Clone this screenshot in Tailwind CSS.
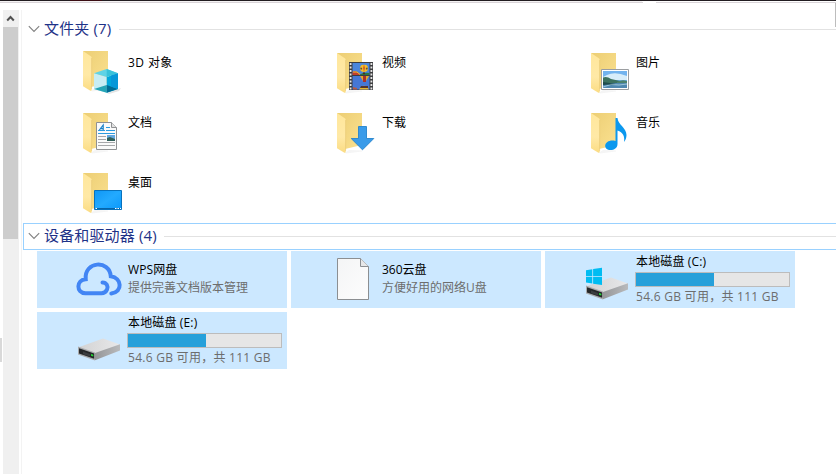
<!DOCTYPE html>
<html lang="zh-CN">
<head>
<meta charset="utf-8">
<title>此电脑</title>
<script src="https://cdn.jsdelivr.net/npm/@tailwindcss/browser@4"></script>
</head>
<body class="w-[836px] h-[474px] overflow-hidden bg-white text-black text-[12px] leading-[18px] font-['Open_Sans','Noto_Sans_CJK_SC',sans-serif] flex flex-col">
<svg class="absolute w-0 h-0">
  <defs>
    <linearGradient id="back" x1="0" y1="0" x2="1" y2="1"><stop offset="0" stop-color="#ecce74"/><stop offset="1" stop-color="#fbe190"/></linearGradient>
    <linearGradient id="front" x1="0" y1="0" x2="0" y2="1"><stop offset="0" stop-color="#ffe79c"/><stop offset=".6" stop-color="#ffe9a6"/><stop offset="1" stop-color="#fbdc83"/></linearGradient>
    <linearGradient id="screen" x1="0" y1="0" x2="1" y2="1"><stop offset="0" stop-color="#0f97f5"/><stop offset=".5" stop-color="#23aaff"/><stop offset="1" stop-color="#0a98fb"/></linearGradient>
    <linearGradient id="metal" x1="0" y1="0" x2="1" y2="0"><stop offset="0" stop-color="#d2d2d3"/><stop offset="1" stop-color="#e8e8e9"/></linearGradient>
    <linearGradient id="side" x1="0" y1="0" x2="1" y2="0"><stop offset="0" stop-color="#959698"/><stop offset="1" stop-color="#b9babc"/></linearGradient>
    <linearGradient id="paper" x1="0" y1="0" x2="1" y2="1"><stop offset="0" stop-color="#f4f5f6"/><stop offset="1" stop-color="#fdfdfd"/></linearGradient>
    <symbol id="folder" viewBox="0 0 48 48">
      <path d="M13 44.5L17 42L30 42.5V43.5L14 45.5Z" fill="#f5f5f5"/>
      <path d="M5 5H30V37L13 41Z" fill="url(#back)"/>
      <path d="M5 5L12.8 10.2Q13.7 10.8 13.7 12V43.5Q13.7 45.3 12 44.4L5 40.2Z" fill="url(#front)"/>
      <path d="M13.6 12V43" stroke="#e2c36a" stroke-width=".5"/>
    </symbol>
    <symbol id="drive" viewBox="0 0 44 26">
      <path d="M1 10.5L26 1.5L43 7.5L18 17.5Z" fill="url(#metal)"/>
      <path d="M18 16L43 7.2V13.5L18 23.3Z" fill="url(#side)"/>
      <path d="M1 9.6L18 15.6V23.4L1 17.6Z" fill="#a9aaac"/>
      <path d="M2 11.2L17.2 16.6V21.8L2 16.6Z" fill="#252729"/>
      <path d="M6 14.5L13 17V19.6L6 17.2Z" fill="#3b3d40"/>
      <path d="M14 17L16.3 17.8V19.6L14 18.8Z" fill="#22dd35"/>
    </symbol>
    <symbol id="balloon" viewBox="0 0 9 10">
      <ellipse cx="4.5" cy="3.8" rx="4" ry="3.8" fill="#f5bd29"/>
      <path d="M4.5 0Q3 3.5 4.5 7.6Q6 3.5 4.5 0" fill="#c33c20"/><path d="M.6 3.2H2.6V5H1.2ZM6.4 3.2H8.4L7.8 5H6.4Z" fill="#38334a" opacity=".8"/>
      <path d="M3.5 8H5.5V10H3.5Z" fill="#49301c"/>
    </symbol>
  </defs>
</svg>

<!-- window edge -->
<div class="h-[3px] shrink-0 flex flex-col">
  <div class="h-px flex bg-[#211c20]"><i class="w-[70px]"></i><i class="w-[32px] bg-[#3a0d13]"></i></div>
  <div class="h-px flex"><i class="w-[642px] bg-[#d9d4d8]/30"></i></div>
  <div class="h-px flex gap-[13px]"><i class="w-[643px] bg-[#d9d4d8]"></i><i class="flex-1 bg-[#d9d4d8]"></i></div>
</div>

<div class="flex flex-1 min-h-0">
  <!-- scrollbar -->
  <div class="w-[3px] shrink-0 pt-[335px]"><div class="w-[2px] h-[24px] bg-[#d9d9d9]"></div></div>
  <div class="w-[16px] shrink-0 mt-[7px] bg-[#f0f0f0]">
    <div class="h-[17px] w-[15px] flex items-center justify-center">
      <svg width="9" height="7" viewBox="0 0 9 7" fill="none" stroke="#505050" stroke-width="2"><path d="M1.2 5.5L4.5 2L7.8 5.5"/></svg>
    </div>
    <div class="h-[212px] w-[15px] bg-[#cdcdcd]"></div>
  </div>
  <div class="w-[3px] shrink-0 mt-[7px] border-r border-[#f3f3f3]"></div>

  <main class="flex-1 min-w-0 flex flex-col pl-px">
    <div class="flex h-[40px] justify-end">
      <div class="flex-1 flex items-center h-[27px] mt-[13px] pl-[6px]">
        <svg class="-mt-[2px] -ml-px" width="12" height="8" viewBox="0 0 12 8" fill="none" stroke="#808080" stroke-width="1.1"><path d="M.8 1.2L6 6.4L11.2 1.2"/></svg>
        <h2 class="ml-[4px] -mt-[2px] w-[75px] text-[15px] leading-[27px] tracking-[0.15px] text-[#1e3287] whitespace-nowrap">文件夹 (7)</h2>
        <div class="flex-1 h-px bg-[#e2e2e2]"></div>
      </div>
      <div class="w-px h-[24px] -ml-px bg-[#bdbdbd]"></div>
    </div>

    <section class="grid grid-cols-[250px_250px_250px] auto-rows-[60px] gap-x-1 pl-[14px] pt-[5px] h-[180px]">
      <div class="flex pl-[41px]">
        <svg class="-mt-[2px]" width="48" height="48" viewBox="0 0 48 48"><use href="#folder"/>
          <path d="M29 47L43 42L41 45L31 48Z" fill="#e4e4e4"/>
          <path d="M16 27.3L28.7 31V46.7L16 43Z" fill="#c7edf4"/><path d="M40 27.3L28.7 31V46.7L40 43Z" fill="#00a7dc"/>
          <path d="M16 27.3L28.7 23L40 27.3L28.7 31Z" fill="#5fd3e6"/><path d="M28.7 23L40 27.3L28.7 31Z" fill="#39c2da"/>
          <path d="M16 43L28.7 39V46.7Z" fill="#25a5b6"/><path d="M40 43L28.7 39V46.7Z" fill="#006c94"/><path d="M40 27.3V43L33 40.5V29.5Z" fill="#0697d8"/>
        </svg><span class="ml-[2px] mt-[6px] tracking-[0.4px]">3D 对象</span>
      </div>
      <div class="flex pl-[41px]">
        <svg width="48" height="48" viewBox="0 0 48 48"><use href="#folder"/>
          <path d="M17 14H41V42H17Z" fill="#3c3d3f"/>
          <path d="M18.6 15V42M39.4 15V42" stroke="#e6e6e6" stroke-width="1.8" stroke-dasharray="2 1.5"/>
          <path d="M20.5 15H37.5V27H20.5Z" fill="#4a86dc"/><path d="M20.5 28H37.5V41.5H20.5Z" fill="#4577d5"/>
          <path d="M20.5 23.5Q24 22 27 25L29 27H20.5Z" fill="#c43c2c"/><path d="M27 27Q31 24 37.5 25V27Z" fill="#2b7745"/>
          <path d="M21 24L25 24L28 26.5" stroke="#e6c639" fill="none"/>
          <use href="#balloon" x="27.5" y="16.5" width="9" height="10"/>
          <path d="M28 28H37L34 33H31Z" fill="#e4a72c"/><path d="M31 28H34V34H31Z" fill="#a93226"/>
          <path d="M27 41.5Q32 34 37 41.5Z" fill="#e7b831"/><path d="M29 38H36V40H28Z" fill="#52362f"/><path d="M21 39L25 40V41.5H21Z" fill="#b65b43"/>
        </svg><span class="ml-[2px] mt-[6px]">视频</span>
      </div>
      <div class="flex pl-[41px]">
        <svg width="48" height="48" viewBox="0 0 48 48"><use href="#folder"/>
          <path d="M15.5 21.5H42.5V41.5H15.5Z" fill="#fff" stroke="#9b9ea1"/>
          <path d="M17 23H41V40H17Z" fill="#72b3ee"/><path d="M21 27Q29 23 41 28V32H17V29Z" fill="#d7edfa"/>
          <path d="M17 29.5Q21 28 25 31L41 34.5V36H17Z" fill="#3c7260"/><path d="M31 34Q36 31 41 33V35H31Z" fill="#4d836f"/>
          <path d="M17 35H41V40H17Z" fill="#4f88b0"/><path d="M17 39Q25 35 33 37L41 36" stroke="#9dc5d9" fill="none"/><path d="M17 34L30 36L17 37Z" fill="#1f4c4b"/>
        </svg><span class="ml-[2px] mt-[6px]">图片</span>
      </div>
      <div class="flex pl-[41px]">
        <svg width="48" height="48" viewBox="0 0 48 48"><use href="#folder"/>
          <path d="M18.5 14.5H33.5L38.5 19.5V41.5H18.5Z" fill="#fafafa" stroke="#8f9193"/><path d="M33.5 14.5V19.5H38.5" fill="#e2e2e2" stroke="#8f9193"/>
          <path d="M21 22.5L25.2 17V22.5M22.4 20.7H25.5" stroke="#1c82c9" stroke-width="1.2" fill="none"/>
          <path d="M20 22.5H27M28 19.5H32M28 22.5H37M20 25.5H37" stroke="#2b9be0"/>
          <path d="M20 28.5H28M20 31.5H28M20 34.5H37M20 37.5H37" stroke="#a6a8aa"/>
          <path d="M29 27H37V33H29Z" fill="#63a8df"/><path d="M29 30L32 29L37 31V33H29Z" fill="#315f59"/>
        </svg><span class="ml-[2px] mt-[6px]">文档</span>
      </div>
      <div class="flex pl-[41px]">
        <svg width="48" height="48" viewBox="0 0 48 48"><use href="#folder"/>
          <path d="M26.5 18.5H34.5V30.5H41.8L30.5 41.8L19.2 30.5H26.5Z" fill="#3a9be9" stroke="#2583cc" stroke-width=".9"/>
        </svg><span class="ml-[2px] mt-[6px]">下载</span>
      </div>
      <div class="flex pl-[41px]">
        <svg width="48" height="48" viewBox="0 0 48 48"><use href="#folder"/>
          <path d="M29.5 10H31.5C32 17 40.5 19.5 40.5 27C40.5 30 39.5 32 38 34C39 28 37 24.5 31.5 22.5V36C31.5 40 28 42 24.5 42C21 42 19 40 19.2 37.5C19.6 34 24 31.5 29.5 33Z" fill="#0b98ee"/>
        </svg><span class="ml-[2px] mt-[6px]">音乐</span>
      </div>
      <div class="flex pl-[41px]">
        <svg width="48" height="48" viewBox="0 0 48 48"><use href="#folder"/>
          <path d="M16.5 22.5H43.5V41.5H16.5Z" fill="url(#screen)" stroke="#0872bd"/><path d="M17 40.5H43" stroke="#0765a9"/><path d="M17.5 40.5H19M37 40.5H38.5M39.5 40.5H41M42 40.5H43" stroke="#fff"/>
        </svg><span class="ml-[2px] mt-[6px]">桌面</span>
      </div>
    </section>

    <div class="flex items-center h-[27px] pl-[4px] border border-r-0 border-[#99d1ff]">
      <svg class="-mt-[2px]" width="12" height="8" viewBox="0 0 12 8" fill="none" stroke="#808080" stroke-width="1.1"><path d="M.8 1.2L6 6.4L11.2 1.2"/></svg>
      <h2 class="ml-[4px] -mt-[2px] w-[120px] text-[15px] leading-[25px] tracking-[0.15px] text-[#1e3287] whitespace-nowrap">设备和驱动器 (4)</h2>
      <div class="flex-1 h-px bg-[#e2e2e2]"></div>
    </div>

    <section class="grid grid-cols-[250px_250px_250px] auto-rows-[57px] gap-1 pl-[14px] mt-px">
      <div class="flex items-center bg-[#cce8ff] pl-[39px]">
        <svg class="-mt-px" width="46" height="34" viewBox="0 0 46 34" fill="none" stroke="#4285f4" stroke-width="4" stroke-linecap="round">
          <path d="M26.5 20.4C30.5 20.4 32.6 24.3 31 27.6Q29.3 31.2 25.5 31.2H9.5C-.2 31.2 .2 17.7 9.7 17.2C8 -1 33.5 -2.5 34.8 14.3C45.8 16 47.2 30 35.3 31.4"/>
        </svg>
        <div class="ml-[6px] -mt-[2px]"><div class="tracking-[0.1px]">WPS网盘</div><div class="text-[#6d6d6d]">提供完善文档版本管理</div></div>
      </div>
      <div class="flex items-center bg-[#cce8ff] pl-[46px]">
        <svg class="-mt-[2px]" width="32" height="42" viewBox="0 0 32 42"><path d="M.5 .5H23.5L31.5 8.5V41.5H.5Z" fill="url(#paper)" stroke="#8c8f92"/><path d="M23.5 .5V8.5H31.5" fill="#e6e7e8" stroke="#8c8f92"/></svg>
        <div class="ml-[13px] -mt-[2px]"><div>360云盘</div><div class="text-[#6d6d6d]">方便好用的网络U盘</div></div>
      </div>
      <div class="flex bg-[#cce8ff] pl-[40px]">
        <div class="w-[44px] pt-[15px]">
          <svg width="44" height="36" viewBox="0 0 44 36"><use href="#drive" x="0" y="10" width="44" height="26"/>
          <path d="M1 4.2L7.3 3.2V10H1ZM8.1 3.1L17 1.8V10H8.1ZM1 10.8H7.3V17.6L1 16.6ZM8.1 10.8H17V19L8.1 17.7Z" fill="#00bcf2"/></svg>
        </div>
        <div class="ml-[6px] w-[155px] pt-[2px]">
          <div class="pl-px tracking-[0.15px]">本地磁盘 (C:)</div>
          <div class="h-[15px] mt-px border border-[#bcbcbc] bg-[#e6e6e6]"><div class="h-full bg-[#26a0da]" style="width:51%"></div></div>
          <div class="pl-px pt-px text-[#6d6d6d] whitespace-nowrap tracking-[0.27px]">54.6 GB 可用，共 111 GB</div>
        </div>
      </div>
      <div class="flex bg-[#cce8ff] pl-[40px]">
        <div class="w-[44px] pt-[25px]"><svg width="44" height="26"><use href="#drive" width="44" height="26"/></svg></div>
        <div class="ml-[6px] w-[155px] pt-[2px]">
          <div class="pl-px tracking-[0.15px]">本地磁盘 (E:)</div>
          <div class="h-[15px] mt-px border border-[#bcbcbc] bg-[#e6e6e6]"><div class="h-full bg-[#26a0da]" style="width:51%"></div></div>
          <div class="pl-px pt-px text-[#6d6d6d] whitespace-nowrap tracking-[0.27px]">54.6 GB 可用，共 111 GB</div>
        </div>
      </div>
    </section>
  </main>
</div>
</body>
</html>
